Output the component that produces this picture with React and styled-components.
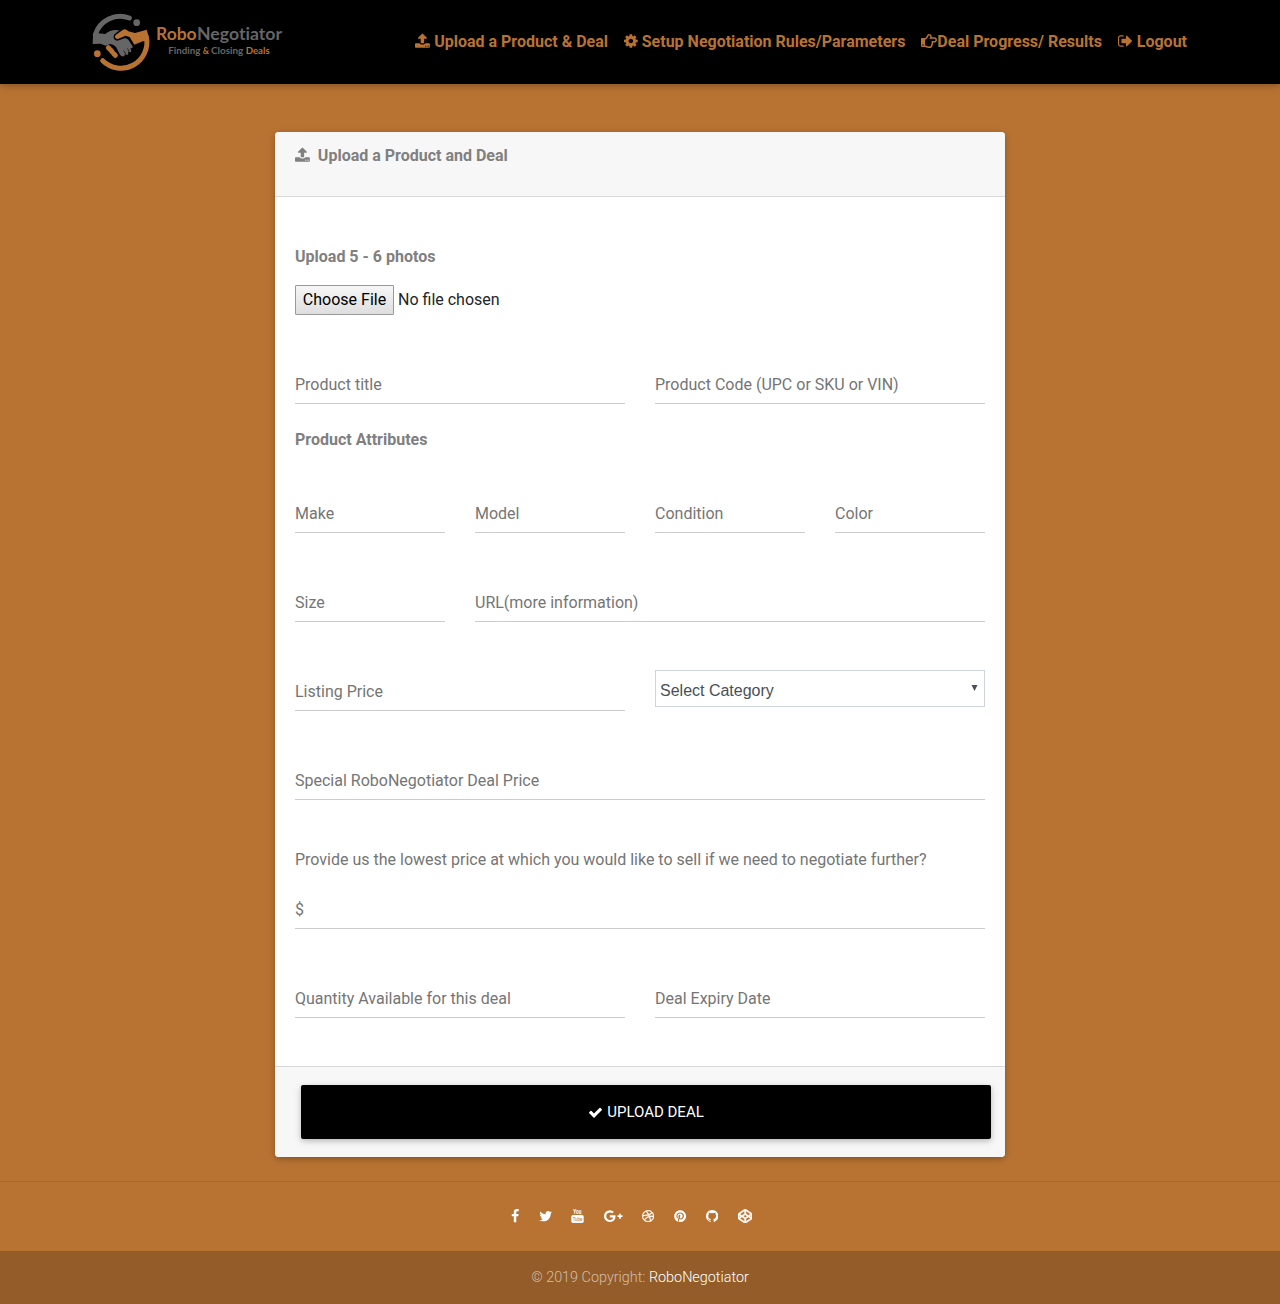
import React from "react";
import styled, { createGlobalStyle } from "styled-components";
import { FaDribbble, FaPinterest, FaCodepen, FaRegHandPointRight } from "react-icons/fa";

const copper = "#b87333";

const GlobalStyle = createGlobalStyle`
  *, *::before, *::after { box-sizing: border-box; }
  body {
    margin: 0;
    background: ${copper};
    font-family: Roboto, "Liberation Sans", sans-serif;
    font-size: 16px;
    font-weight: 300;
    line-height: 24px;
    color: #212529;
  }
`;

const Navbar = styled.nav`
  display: flex;
  justify-content: space-between;
  height: 84px;
  padding: 0 93px 0 80px;
  background: #000;
  box-shadow: 0 2px 5px rgba(0, 0, 0, 0.16), 0 2px 10px rgba(0, 0, 0, 0.12);
`;

const Brand = styled.a`
  display: flex;
  width: 220px;
`;

const LogoText = styled.g`
  font-family: Lato, sans-serif;
  font-weight: 700;
  font-variant-ligatures: none;
`;

const NavLinks = styled.div`
  display: flex;
  align-items: center;
  gap: 16px;
`;

const NavLink = styled.a`
  display: flex;
  align-items: center;
  gap: ${(p) => (p.$tight ? "0" : "4px")};
  color: ${copper};
  font-weight: 700;
  white-space: nowrap;

  svg { margin-bottom: 2px; }
`;

const Glyph = styled.svg`
  display: block;
  flex: none;
  fill: currentColor;
`;

const Page = styled.main`
  display: flex;
  justify-content: center;
  padding: 48px 0 24px;
`;

const Card = styled.form`
  width: 730px;
  height: 1025px;
  display: flex;
  flex-direction: column;
  background: #fff;
  border-radius: 4px;
  overflow: hidden;
  box-shadow: 0 2px 5px rgba(0, 0, 0, 0.16), 0 2px 10px rgba(0, 0, 0, 0.12);
`;

const CardHeader = styled.header`
  display: flex;
  gap: 8px;
  height: 65px;
  padding: 12px 20px;
  background: #f7f7f7;
  border-bottom: 1px solid #d9d9d9;
  color: gray;
  font-weight: 700;

  svg { margin-top: 3px; }
`;

const CardBody = styled.div`
  flex: 1;
  padding: 48px 20px 0;
`;

const CardFooter = styled.footer`
  height: 91px;
  padding: 18px 14px 18px 26px;
  background: #f7f7f7;
  border-top: 1px solid #d9d9d9;
`;

const SubmitButton = styled.button`
  display: flex;
  align-items: center;
  justify-content: center;
  gap: 4px;
  width: 690px;
  height: 54px;
  padding: 0;
  border: 0;
  border-radius: 2px;
  background: #000;
  color: #fff;
  font: 400 15px/22px Roboto, sans-serif;
  text-transform: uppercase;
  box-shadow: 0 2px 5px rgba(0, 0, 0, 0.16), 0 2px 10px rgba(0, 0, 0, 0.12);
`;

const Heading = styled.div`
  color: gray;
  font-weight: 700;
  margin-top: ${(p) => p.$top || 0}px;
`;

const Question = styled.div`
  color: #757575;
  font-weight: 400;
  margin-top: 48px;
`;

const FilePicker = styled.div`
  display: flex;
  align-items: center;
  gap: 4px;
  height: 30px;
  margin-top: 16px;
  color: #212529;
  font-weight: 400;
`;

const FileButton = styled.button`
  width: 99px;
  height: 30px;
  padding: 0;
  border: 1px solid #999;
  border-radius: 1px;
  background: linear-gradient(#f6f6f6, #dedede);
  color: #000;
  font: 400 16px/24px Roboto, sans-serif;
`;

const Row = styled.div`
  display: grid;
  grid-template-columns: ${(p) => p.$columns || "1fr"};
  column-gap: 30px;
  margin-top: ${(p) => p.$top ?? 48}px;
`;

const Field = styled.input`
  width: 100%;
  min-width: 0;
  height: 41px;
  padding: 3px 0 0;
  border: 0;
  border-bottom: 1px solid #ccc;
  outline: 0;
  background: transparent;
  color: #495057;
  font: 400 16px/24px Roboto, sans-serif;

  &::placeholder { color: #757575; opacity: 1; }
`;

const Select = styled.div`
  display: flex;
  align-items: center;
  justify-content: space-between;
  height: 37px;
  padding: 5px 6px 0 4px;
  border: 1px solid #ced4da;
  color: #495057;
  font: 400 16px/24px "Liberation Sans", Arial, sans-serif;

  svg { margin-top: -7px; }
`;

const PageFooter = styled.footer`
  border-top: 1px solid #a6682e;
`;

const SocialRow = styled.div`
  display: flex;
  align-items: center;
  justify-content: center;
  gap: 19.6px;
  height: 69px;
  padding: 0 17px 1px 0;
  color: #fff;

  svg { display: block; flex: none; }
`;

const Copyright = styled.div`
  height: 53px;
  background: rgba(0, 0, 0, 0.2);
  color: rgba(255, 255, 255, 0.6);
  font-size: 14.4px;
  line-height: 53px;
  text-align: center;

  a { color: #fff; }
`;

const shapes = {
  upload: {
    box: "64 0 1664 1792",
    d: "M1344 1472q0-26-19-45t-45-19-45 19-19 45 19 45 45 19 45-19 19-45zm256 0q0-26-19-45t-45-19-45 19-19 45 19 45 45 19 45-19 19-45zm128-224v320q0 40-28 68t-68 28h-1472q-40 0-68-28t-28-68v-320q0-40 28-68t68-28h427q21 56 70.5 92t110.5 36h256q61 0 110.5-36t70.5-92h427q40 0 68 28t28 68zm-325-648q-17 40-59 40h-256v448q0 26-19 45t-45 19h-256q-26 0-45-19t-19-45v-448h-256q-42 0-59-40-17-39 14-69l448-448q18-19 45-19t45 19l448 448q31 30 14 69z",
  },
  cog: {
    box: "128 0 1536 1792",
    d: "M1152 896q0-106-75-181t-181-75-181 75-75 181 75 181 181 75 181-75 75-181zm512-109v222q0 12-8 23t-20 13l-185 28q-19 54-39 91 35 50 107 138 10 12 10 25t-9 23q-27 37-99 108t-94 71q-12 0-26-9l-138-108q-44 23-91 38-16 136-29 186-7 28-36 28h-222q-14 0-24.5-8.5t-11.5-21.5l-28-184q-49-16-90-37l-141 107q-10 9-25 9-14 0-25-11-126-114-165-168-7-10-7-23 0-12 8-23 15-21 51-66.5t54-70.5q-27-50-41-99l-183-27q-13-2-21-12.5t-8-23.5v-222q0-12 8-23t19-13l186-28q14-46 39-92-40-57-107-138-10-12-10-24 0-10 9-23 26-36 98.5-107.5t94.5-71.5q13 0 26 10l138 107q44-23 91-38 16-136 29-186 7-28 36-28h222q14 0 24.5 8.5t11.5 21.5l28 184q49 16 90 37l142-107q9-9 24-9 13 0 25 10 129 119 165 170 7 8 7 22 0 12-8 23-15 21-51 66.5t-54 70.5q26 50 41 98l183 28q13 2 21 12.5t8 23.5z",
  },
  signOut: {
    box: "64 0 1664 1792",
    d: "M704 1440q0 4 1 20t.5 26.5-3 23.5-10 19.5-20.5 6.5h-320q-119 0-203.5-84.5t-84.5-203.5v-704q0-119 84.5-203.5t203.5-84.5h320q13 0 22.5 9.5t9.5 22.5q0 4 1 20t.5 26.5-3 23.5-10 19.5-20.5 6.5h-320q-66 0-113 47t-47 113v704q0 66 47 113t113 47h312l11.5 1 11.5 3 8 5.5 7 9 2 13.5zm928-544q0 26-19 45l-544 544q-19 19-45 19t-45-19-19-45v-288h-448q-26 0-45-19t-19-45v-384q0-26 19-45t45-19h448v-288q0-26 19-45t45-19 45 19l544 544q19 19 19 45z",
  },
  check: {
    box: "0 0 1792 1792",
    d: "M1671 566q0 40-28 68l-724 724-136 136q-28 28-68 28t-68-28l-136-136-362-362q-28-28-28-68t28-68l136-136q28-28 68-28t68 28l294 295 656-657q28-28 68-28t68 28l136 136q28 28 28 68z",
  },
  facebook: {
    box: "384 0 1024 1792",
    d: "M1343 12v264h-157q-86 0-116 36t-30 108v189h293l-39 296h-254v759h-306v-759h-255v-296h255v-218q0-186 104-288.5t277-102.5q147 0 228 12z",
  },
  twitter: {
    box: "64 0 1664 1792",
    d: "M1684 408q-67 98-162 167 1 14 1 42 0 130-38 259.5t-115.5 248.5-184.5 210.5-258 146-323 54.5q-271 0-496-145 35 4 78 4 225 0 401-138-105-2-188-64.5t-114-159.5q33 5 61 5 43 0 85-11-112-23-185.5-111.5t-73.5-205.5v-4q68 38 146 41-66-44-105-115t-39-154q0-88 44-163 121 149 294.5 238.5t371.5 99.5q-8-38-8-74 0-134 94.5-228.5t228.5-94.5q140 0 236 102 109-21 205-78-37 115-142 178 93-10 186-50z",
  },
  googlePlus: {
    box: "0 0 2304 1792",
    d: "M1437 913q0 208-87 370.5t-248 254-369 91.5q-149 0-285-58t-234-156-156-234-58-285 58-285 156-234 234-156 285-58q286 0 491 192l-199 191q-117-113-292-113-123 0-227.5 62t-165.5 168.5-61 232.5 61 232.5 165.5 168.5 227.5 62q83 0 152.5-23t114.5-57.5 78.5-78.5 49-83 21.5-74h-416v-252h692q12 63 12 122zm867-122v210h-209v209h-210v-209h-209v-210h209v-209h210v209h209z",
  },
  github: {
    box: "128 0 1536 1792",
    d: "M896 128q209 0 385.5 103t279.5 279.5 103 385.5q0 251-146.5 451.5t-378.5 277.5q-27 5-40-7t-13-30q0-3 .5-76.5t.5-134.5q0-97-52-142 57-6 102.5-18t94-39 81-66.5 53-105 20.5-150.5q0-119-79-206 37-91-8-204-28-9-81 11t-92 44l-38 24q-93-26-192-26t-192 26q-16-11-42.5-27t-83.5-38.5-85-13.5q-45 113-8 204-79 87-79 206 0 85 20.5 150t52.5 105 80.5 67 94 39 102.5 18q-39 36-49 103-21 10-45 15t-57 5-65.5-21.5-55.5-62.5q-19-32-48.5-52t-49.5-24l-20-3q-21 0-29 4.5t-5 11.5 9 14 13 12l7 5q22 10 43.5 38t31.5 51l10 23q13 38 44 61.5t67 30 69.5 7 55.5-3.5l23-4q0 38 .5 88.5t.5 54.5q0 18-13 30t-40 7q-232-77-378.5-277.5t-146.5-451.5q0-209 103-385.5t279.5-279.5 385.5-103z",
  },
};

function Icon({ name, size = 16 }) {
  const { box, d } = shapes[name];
  const [, , w, h] = box.split(" ").map(Number);
  return (
    <Glyph viewBox={box} width={(size * w) / h} height={size}>
      <path d={d} />
    </Glyph>
  );
}

function Logo() {
  return (
    <svg width="220" height="84" viewBox="0 0 660 252">
      <g fill="none" strokeLinecap="round" strokeWidth="15">
        <path d="M46 104A78 78 0 0 1 148 54" stroke="#666" />
        <path d="M68 182A78 78 0 0 0 199 110" stroke={copper} />
      </g>
      <circle cx="170" cy="68" r="10" fill="#666" />
      <circle cx="52" cy="161" r="10" fill={copper} />
      <path d="M41 98L76 102Q92 87 118 91L102 104Q97 119 112 122L136 114L145 119L158 139Q159 147 151 144L154 152Q152 160 144 154L145 162Q141 169 134 161L134 167Q127 173 120 164L108 141Q102 134 90 132L77 137L62 131L38 132Q38 112 41 98Z" fill="#666" />
      <path d="M106 106L129 89Q137 85 145 94L165 99L200 89Q207 106 206 124L188 124L163 134L149 111L136 107L114 117Q102 117 106 106Z" fill={copper} />
      <path d="M131 152L138 163M142 145L148 154" stroke="#000" strokeWidth="2" />
      <path d="M85 143L89 147M93 151L97 156M101 161L106 166" stroke={copper} strokeWidth="15" strokeLinecap="round" />
      <LogoText>
        <text x="228" y="120" fontSize="50" fill={copper} textLength="122" lengthAdjust="spacingAndGlyphs">Robo</text>
        <text x="351" y="120" fontSize="50" fill="#666" textLength="255" lengthAdjust="spacingAndGlyphs">Negotiator</text>
        <g fontSize="26">
          <text x="265" y="162" fill="#666" textLength="96" lengthAdjust="spacingAndGlyphs">Finding</text>
          <text x="368" y="162" fill={copper}>&amp;</text>
          <text x="393" y="162" fill="#666" textLength="97" lengthAdjust="spacingAndGlyphs">Closing</text>
          <text x="497" y="162" fill={copper} textLength="72" lengthAdjust="spacingAndGlyphs">Deals</text>
        </g>
      </LogoText>
    </svg>
  );
}

function YouTubeIcon() {
  return (
    <svg width="13" height="20" viewBox="0 0 39 60" overflow="visible" fontFamily="Roboto, sans-serif" fontWeight="700">
      <text x="7" y="24" fontSize="20" fill="#fff" textLength="24" lengthAdjust="spacingAndGlyphs">You</text>
      <rect x="1" y="27" width="37" height="24" rx="5" fill="#fff" />
      <text x="5" y="46" fontSize="18" fontWeight="400" fill={copper} textLength="29" lengthAdjust="spacingAndGlyphs">Tube</text>
    </svg>
  );
}

export default function App() {
  return (
    <>
      <GlobalStyle />
      <Navbar>
        <Brand><Logo /></Brand>
        <NavLinks>
          <NavLink><Icon name="upload" />Upload a Product &amp; Deal</NavLink>
          <NavLink><Icon name="cog" />Setup Negotiation Rules/Parameters</NavLink>
          <NavLink $tight><FaRegHandPointRight size={16} />Deal Progress/ Results</NavLink>
          <NavLink><Icon name="signOut" />Logout</NavLink>
        </NavLinks>
      </Navbar>
      <Page>
        <Card>
          <CardHeader><Icon name="upload" />Upload a Product and Deal</CardHeader>
          <CardBody>
            <Heading>Upload 5 - 6 photos</Heading>
            <FilePicker>
              <FileButton type="button">Choose File</FileButton>
              <span>No file chosen</span>
            </FilePicker>
            <Row $columns="1fr 1fr">
              <Field placeholder="Product title" />
              <Field placeholder="Product Code (UPC or SKU or VIN)" />
            </Row>
            <Heading $top={24}>Product Attributes</Heading>
            <Row $columns="repeat(4, 1fr)" $top={40}>
              <Field placeholder="Make" />
              <Field placeholder="Model" />
              <Field placeholder="Condition" />
              <Field placeholder="Color" />
            </Row>
            <Row $columns="150px 1fr">
              <Field placeholder="Size" />
              <Field placeholder="URL(more information)" />
            </Row>
            <Row $columns="1fr 1fr">
              <Field placeholder="Listing Price" />
              <Select>
                Select Category
                <svg width="7" height="6" viewBox="0 0 7 6"><path d="M.5 0h6L3.5 6z" fill="#495057" /></svg>
              </Select>
            </Row>
            <Row><Field placeholder="Special RoboNegotiator Deal Price" /></Row>
            <Question>Provide us the lowest price at which you would like to sell if we need to negotiate further?</Question>
            <Row $top={16}><Field placeholder="$" /></Row>
            <Row $columns="1fr 1fr">
              <Field placeholder="Quantity Available for this deal" />
              <Field placeholder="Deal Expiry Date" />
            </Row>
          </CardBody>
          <CardFooter>
            <SubmitButton type="button"><Icon name="check" size={15} />Upload Deal</SubmitButton>
          </CardFooter>
        </Card>
      </Page>
      <PageFooter>
        <SocialRow>
          <Icon name="facebook" size={14.4} />
          <Icon name="twitter" size={14.4} />
          <YouTubeIcon />
          <Icon name="googlePlus" size={14.4} />
          <FaDribbble size={12.3} stroke="currentColor" strokeWidth="14" />
          <FaPinterest size={12.3} />
          <Icon name="github" size={14.4} />
          <FaCodepen size={14.4} stroke="currentColor" strokeWidth="18" />
        </SocialRow>
        <Copyright>© 2019 Copyright: <a>RoboNegotiator</a></Copyright>
      </PageFooter>
    </>
  );
}
